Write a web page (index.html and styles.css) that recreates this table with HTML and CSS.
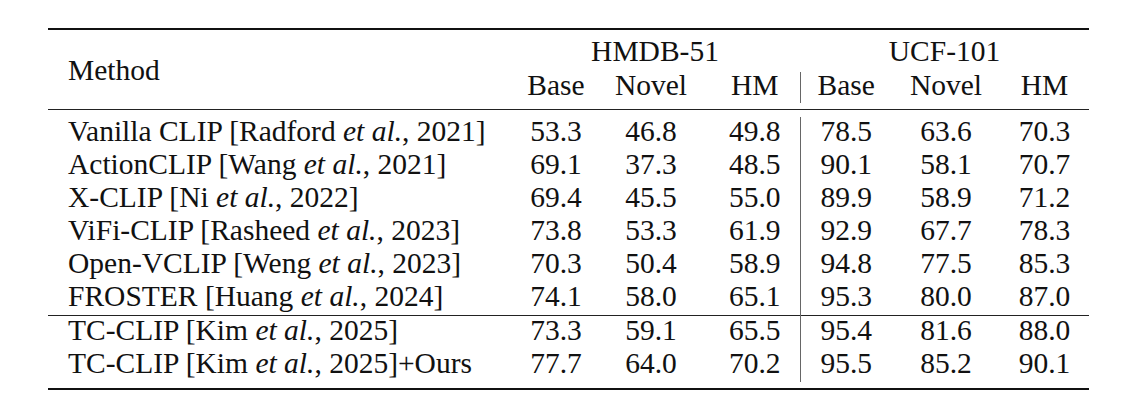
FILE: index.html
```html
<!DOCTYPE html>
<html lang="en">
  <head>
    <meta charset="UTF-8" />
    <title>Results table</title>
    <link rel="stylesheet" href="styles.css">
  </head>
  <body>
    <table class="results">
      <colgroup>
        <col class="c-method">
        <col class="c-base">
        <col class="c-novel">
        <col class="c-hm">
        <col class="c-base2">
        <col class="c-novel2">
        <col class="c-hm2">
      </colgroup>
      <thead>
        <tr class="head1">
          <th rowspan="2" class="method">Method</th>
          <th colspan="3">HMDB-51</th>
          <th colspan="3">UCF-101</th>
        </tr>
        <tr class="head2">
          <th>Base</th>
          <th>Novel</th>
          <th class="hm">HM</th>
          <th class="sep">Base</th>
          <th>Novel</th>
          <th>HM</th>
        </tr>
        <tr class="gap gap-head"><td colspan="7"></td></tr>
        <tr class="gap gap-mid"><td colspan="7"></td></tr>
      </thead>
      <tbody>
        <tr>
          <td class="method">Vanilla CLIP [Radford <i>et al.</i>, 2021]</td>
          <td>53.3</td><td>46.8</td><td class="hm">49.8</td>
          <td class="sep">78.5</td><td>63.6</td><td>70.3</td>
        </tr>
        <tr>
          <td class="method">ActionCLIP [Wang <i>et al.</i>, 2021]</td>
          <td>69.1</td><td>37.3</td><td class="hm">48.5</td>
          <td class="sep">90.1</td><td>58.1</td><td>70.7</td>
        </tr>
        <tr>
          <td class="method">X-CLIP [Ni <i>et al.</i>, 2022]</td>
          <td>69.4</td><td>45.5</td><td class="hm">55.0</td>
          <td class="sep">89.9</td><td>58.9</td><td>71.2</td>
        </tr>
        <tr>
          <td class="method">ViFi-CLIP [Rasheed <i>et al.</i>, 2023]</td>
          <td>73.8</td><td>53.3</td><td class="hm">61.9</td>
          <td class="sep">92.9</td><td>67.7</td><td>78.3</td>
        </tr>
        <tr>
          <td class="method">Open-VCLIP [Weng <i>et al.</i>, 2023]</td>
          <td>70.3</td><td>50.4</td><td class="hm">58.9</td>
          <td class="sep">94.8</td><td>77.5</td><td>85.3</td>
        </tr>
        <tr>
          <td class="method">FROSTER [Huang <i>et al.</i>, 2024]</td>
          <td>74.1</td><td>58.0</td><td class="hm">65.1</td>
          <td class="sep">95.3</td><td>80.0</td><td>87.0</td>
        </tr>
        <tr class="ruled">
          <td class="method">TC-CLIP [Kim <i>et al.</i>, 2025]</td>
          <td>73.3</td><td>59.1</td><td class="hm">65.5</td>
          <td class="sep">95.4</td><td>81.6</td><td>88.0</td>
        </tr>
        <tr>
          <td class="method">TC-CLIP [Kim <i>et al.</i>, 2025]+Ours</td>
          <td>77.7</td><td>64.0</td><td class="hm">70.2</td>
          <td class="sep">95.5</td><td>85.2</td><td>90.1</td>
        </tr>
        <tr class="gap gap-foot"><td colspan="7"></td></tr>
      </tbody>
    </table>
  </body>
</html>
```

FILE: styles.css
```css
body {
  background: #fff;
  margin: 0;
  padding: 28px 0 0 48px;
  font-family: "Liberation Serif", "Times New Roman", serif;
  color: #111;
}

.results {
  border-collapse: collapse;
  table-layout: fixed;
  width: 1041px;
  font-size: 29.5px;
  border-top: 2px solid #111;
  border-bottom: 2px solid #111;
}

.c-method { width: 462px; }
.c-base { width: 92px; }
.c-novel { width: 98px; }
.c-hm { width: 100px; }
.c-base2 { width: 92px; }
.c-novel2 { width: 108px; }
.c-hm2 { width: 89px; }

th,
td {
  padding: 0;
  text-align: center;
  font-weight: normal;
  white-space: nowrap;
}

.method {
  text-align: left;
  padding-left: 20px;
}

th.method {
  vertical-align: middle;
  padding-top: 6px;
}

.hm {
  padding-left: 10px;
}

.head1 th {
  height: 42px;
  line-height: 42px;
}

.head2 th {
  height: 31px;
  line-height: 27px;
  vertical-align: top;
}

.sep {
  border-left: 1px solid #666;
}

.gap td {
  padding: 0;
}

.gap-head td {
  height: 6px;
}

.gap-mid td {
  height: 7px;
  border-top: 1px solid #222;
}

tbody td {
  height: 33px;
  line-height: 29px;
  vertical-align: top;
}

.ruled td {
  border-top: 1px solid #222;
}

.gap-foot td {
  height: 6px;
}
```
